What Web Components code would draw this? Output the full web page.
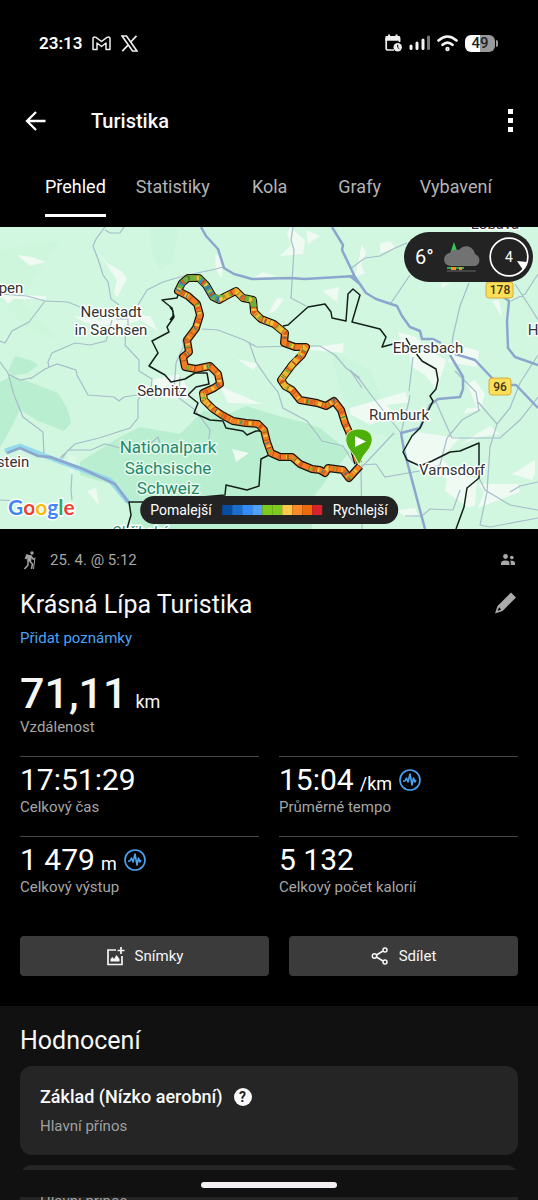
<!DOCTYPE html>
<html lang="cs">
<head>
<meta charset="utf-8">
<meta name="viewport" content="width=device-width, initial-scale=1">
<title>Turistika</title>
<style>
  html, body { margin: 0; background: #000; }
  body { font-family: Roboto, "Liberation Sans", sans-serif; color: #fff; }
</style>
</head>
<body>
<hike-page></hike-page>

<script>
const define = (name, html, setup) => {
  const tpl = document.createElement('template');
  tpl.innerHTML = html;
  customElements.define(name, class extends HTMLElement {
    constructor() {
      super();
      this.attachShadow({ mode: 'open' }).append(tpl.content.cloneNode(true));
    }
    connectedCallback() { if (setup) setup(this, this.shadowRoot); }
  });
};

/* System status bar */
define('status-bar', `
<style>
  :host { display: flex; align-items: center; justify-content: space-between; height: 86px; padding: 0 43px 0 39px; }
  div { display: flex; align-items: center; }
  .time { font-size: 17px; font-weight: 600; line-height: 24px; margin-right: 10px; }
  .left svg + svg { margin-left: 10px; }
  .battery { position: relative; display: flex; justify-content: center; width: 30px; height: 17px; border-radius: 6px; color: #222; font-size: 15px; font-weight: 500; background: linear-gradient(90deg, #fff 50%, #999 50%); line-height: 17px; }
  .battery::after { content: ""; position: absolute; right: -3px; top: 5px; width: 2px; height: 7px; border-radius: 0 2px 2px 0; background: #999; }
  .right { gap: 7px; }
</style>
<div class="left">
  <span class="time">23:13</span>
  <svg width="19" height="15" viewBox="0 0 19 15" fill="none" stroke="#eee" stroke-width="1.500" stroke-linejoin="round"><path d="M1 13.500V2.500Q1 .4 4 1.400L9.500 5.500 15 1.400Q18 .4 18 2.500V13.500H14V7L9.500 10.500 5 7V13.500Z"/></svg>
  <svg width="17" height="17" viewBox="0 0 17 17" fill="none" stroke="#eee" stroke-width="1.700"><path d="M1 1H5.500L16 16H11.500Z"/><path d="M15.500 .8 9.700 7M7.300 9.800 1.300 16.200"/></svg>
</div>
<div class="right">
  <svg width="17" height="18" viewBox="0 0 17 18"><path d="M1.200 4V14.500Q1.200 16 3 16H9M14.500 4V8" fill="none" stroke="#eee" stroke-width="1.700"/><path d="M.4 2.500Q.4 2 1.500 2H3V.5H5V2H10.500V.5H12.500V2H14Q15.200 2 15.200 3V6.800H.4Z" fill="#eee"/><circle cx="12.700" cy="13.200" r="4.200" fill="#eee"/><path d="M12.700 10.700V13.300L14.300 14.800" stroke="#000" fill="none"/></svg>
  <svg width="21" height="16" viewBox="0 0 21 16"><g stroke-linecap="round" stroke-width="3"><path d="M2 11V13.500M8 8V13.500M14 5V13.500" stroke="#f4f4f4"/><path d="M19.500 2V13.500" stroke="#777"/></g></svg>
  <svg width="21" height="17" viewBox="0 0 21 17" fill="none" stroke="#f4f4f4" stroke-width="2.600" stroke-linecap="round"><path d="M1.500 5.500Q10.500-2.500 19.500 5.500M5.500 9.800Q10.500 5.300 15.500 9.800"/><circle cx="10.500" cy="14" r=".9"/></svg>
  <div class="battery">49</div>
</div>`);

/* Title row with back and overflow buttons */
define('app-header', `
<style>
  :host { display: flex; align-items: center; height: 70px; padding: 0 22px 0 23px; }
  button { display: flex; padding: 0; border: 0; background: none; }
  h1 { flex: 1; margin: 0 0 0 44px; font-size: 20px; line-height: 24px; font-weight: 500; color: #fafafa; }
</style>
<button aria-label="Zpět"><svg width="24" height="24" viewBox="0 0 24 24" fill="none" stroke="#fff" stroke-width="2.300"><path d="M22.500 12H4M13 3 4 12 13 21"/></svg></button>
<h1><slot></slot></h1>
<button aria-label="Další možnosti"><svg width="11" height="26" viewBox="0 0 11 26" fill="#fff"><path d="M3 1h5v5H3zM3 10h5v5H3zM3 19h5v5H3z"/></svg></button>`);

define('tab-item', `
<style>
  :host { display: block; box-sizing: border-box; min-width: 90px; padding: 0 15px; text-align: center; }
  button { box-sizing: border-box; height: 61px; padding: 4px 0 0; border: 0; border-bottom: 3px solid transparent; background: none; color: #b4b4b4; font: 18px/24px Roboto, "Liberation Sans", sans-serif; }
  :host([selected]) button { color: #fff; border-color: #fff; }
</style>
<button role="tab"><slot></slot></button>`);

define('tab-strip', `
<style>:host { display: flex; height: 71px; padding-left: 30px; box-sizing: border-box; }</style>
<slot></slot>`);

/* Map with the recorded route */
define('route-map', `
<style>
  :host { display: block; position: relative; overflow: hidden; background: #d1f7e0; }
  .map { display: block; width: 100%; height: auto; }
  .pill { position: absolute; display: flex; align-items: center; background: #232323; box-sizing: border-box; }
  .weather { top: 5px; right: 5px; width: 129px; height: 50px; border-radius: 25px; padding: 0 4px 0 11px; font-size: 20px; justify-content: space-between; }
  .legend { left: 50%; bottom: 5px; transform: translateX(-50%); height: 28px; border-radius: 14px; padding: 0 10px; gap: 10px; font-size: 14px; line-height: 20px; white-space: nowrap; }
  .scale { display: flex; width: 101px; height: 10px; }
  .scale i { flex: 1; }
  .place { font-size: 15px; fill: #333; text-anchor: middle; stroke: #fff; stroke-width: 3px; paint-order: stroke; stroke-linejoin: round; }
  .park { font-size: 17px; fill: #26886a; stroke: #e5faed; }
  .shield { font-size: 12px; font-weight: 500; fill: #443511; text-anchor: middle; }
  .logo { font-family: Lato, sans-serif; font-size: 21px; font-weight: 700; stroke: #fff; stroke-width: 3px; paint-order: stroke; stroke-linejoin: round; }
</style>
<svg class="map" viewBox="0 227 538 302">
  <rect y="227" width="538" height="302" fill="#d1f7e0"/>
  <g fill="#b9efd0">
    <path d="M0 382 12 376 35 384 58 393 68 410 71 423 64 431 38 421 20 410 10 430 0 448Z"/>
    <path d="M8 371 15 356 30 360 38 365 28 373 12 376Z"/>
    <path d="M80 462 118 438 140 427 180 434 204 410 220 418 246 406 282 417 303 422 320 428 350 452 330 475 315 495 312 529H133L128 502 110 484 80 475Z"/>
    <path d="M150 227H180L172 262 160 270 151 250Z" opacity=".2"/>
    <path d="M330 350 370 370 400 440 360 430 340 390Z" opacity=".2"/>
    <path d="M60 240 20 300 60 340 30 330 0 300V250Z" opacity=".15"/>
  </g>
  <g fill="#effaf3">
    <path d="M17 255 32 257 46 262 30 266Z"/><path d="M97 250 107 263 123 272 127 279 117 297 114 293 117 280 109 268Z"/>
    <path d="M0 294 46 296 46 299 14 299 8 304Z"/><path d="M74 316 100 320 110 315 150 316 158 331 140 320 120 327 85 323Z"/>
    <path d="M290 227 305 240 303 254 280 256 291 245 287 234Z"/><path d="M306 230 320 236 308 244Z"/>
    <path d="M277 298 284 299 275 311 268 314Z"/><path d="M322 291 339 287 337 302Z"/><path d="M310 348 344 343 343 353 310 350Z"/>
    <path d="M253 278 263 272 276 276Z"/><path d="M215 254 223 259 222 278 216 270Z"/><path d="M220 386 250 399 262 404 228 403Z"/>
    <path d="M232 449 249 453 236 462 234 454Z"/><path d="M150 380 178 374 185 383 190 399 162 398Z"/><path d="M237 359 258 364 253 370Z"/>
    <path d="M350 408 405 392 409 402 387 405 395 415 370 425 350 414Z"/><path d="M398 332 416 337 425 348 446 360 437 390 425 375 412 367 408 350 402 344Z"/>
    <path d="M465 347 479 351 477 367 448 362 450 356Z"/><path d="M475 380 485 394 480 410 463 414 467 408 477 408 467 384Z"/>
    <path d="M415 432 460 438 454 444 442 458 455 474 477 478 475 505 469 508 445 491 447 478 418 470 403 455 407 445Z"/>
    <path d="M478 484 518 484 520 492 478 508 484 492Z"/><path d="M535 460V473L532 480 512 474Z"/>
    <path d="M492 301 499 300 502 317Z"/><path d="M362 244 366 253 361 265 365 273 355 277Z"/><path d="M380 243 390 241 396 249 380 253Z"/>
    <path d="M68 454 76 457 74 476 69 472Z" opacity=".4"/><path d="M87 491 96 488 99 505Z"/><path d="M397 510 415 508 418 515 405 517Z"/>
    <path d="M441 283 450 283 442 288ZM460 445 472 437 490 426 500 434 480 437Z"/>
  </g>
  <g fill="none" stroke="#a7bdca" stroke-width="1.200">
    <path d="M105 227 96 239 93 246 99 262 103 275 108 282 111 299 119 305M105 230 110 233 120 233 124 227M0 294 27 296 45 301 68 302 80 307M45 301 29 322 12 331 5 343 0 341M112 320 106 341 90 345 75 343 52 353 48 362 49 368M30 379 45 369 57 364 76 370 77 375 88 395 114 397 119 401 124 397 137 395 151 389 152 379 139 371 139 360 125 345 126 326M116 319H128V326M138 305 147 290 163 282 180 277 197 273 216 269 223 267M0 362 8 373 14 395 23 417 43 432 44 455 52 458M8 374 20 380 31 378M60 458 75 444 99 438 130 428 138 418 138 400 145 391M62 459 68 450 91 450 105 444 120 448 150 444 158 437 160 443M72 474 71 490 72 500M0 500 20 501M202 329 218 330 244 340 257 347 300 346 320 346 335 355 346 368 360 378M249 342 256 362 269 381 278 392 283 408 307 421 322 441 343 446 355 465M293 227 291 240 294 250 291 298 306 306M350 269 365 258 380 256 393 249 407 243M391 303 410 275M469 283 460 306 453 336 451 353M515 284 530 307 538 320M511 301 525 294 538 274M538 355 520 383 510 408 497 424 490 447 487 492 480 525 490 527 538 518M478 402 497 424M538 397 520 420 500 438 452 438 436 402M480 410 462 420 447 438 440 465 425 470 385 477 376 464 361 465M361 468 394 433M361 468 362 529M405 516 422 516 430 509 453 510 460 490M479 478 485 490 510 505 538 510M538 482 520 486 510 492M410 395 408 405 401 433M413 357 409 391M455 371 476 392 479 411"/>
    <path d="M180 377 179 398 195 410 210 430 208 447M174 390 176 363 184 345 182 340M350 370 360 380 371 395 401 433M350 370 362 388"/>
  </g>
  <g fill="none" stroke-linejoin="round">
    <path d="M5 451 20 446 40 454 75 467 110 480 128 502" stroke="#95d9ec" stroke-width="5"/>
    <g stroke="#8ca6cd" stroke-width="2.500">
      <path d="M7 453 20 448 38 456 50 457 83 469 115 484 129 503M201 227 206 236 218 249 224 268 234 274 252 279 290 278 305 279 355 276M332 227 343 245 342 250 355 277 366 293 376 299 397 306 402 316 410 327 420 331 422 339 433 339 441 343M455 354 475 360 492 378 503 385 516 385 538 408M350 276 360 284M502 296 509 301 507 321 508 348 515 357 538 365M450 355 463 377 463 389 460 397 438 399 430 405 420 428 401 433 404 450 425 529"/>
    </g>
    <g stroke="#15201b" stroke-width="1.500">
      <path d="M180 288 177 298 162 300 172 308 174 317 167 327 169 332 152 341 158 353 149 366 165 375 171 382 185 379 195 373 207 373 209 384 196 387 188 395 198 403 194 413 210 420 223 421 226 428 243 431 247 435 256 431 263 431M269 455 261 459 259 486 247 490 226 485 225 495 145 502H129L131 515 127 529M170 307 173 311V316L170 320"/>
      <path d="M283 326 288 325 308 307 325 304 331 312 332 318 346 321 348 294 353 289 360 295 352 322 380 329 386 337 382 347 393 344M406 338 411 347 422 361 436 369 438 380 436 389 430 396 433 401 420 428 412 436 403 452 407 460 420 466 432 461 450 452 460 451 479 443V478L467 488 464 507 456 529"/>
    </g>
    <path id="route" d="M358 463 349 432 345 423 341 410 334 401 326 406 317 403 300 400 292 390 285 386 281 380 292 365 302 355 306 347 295 347 284 343 285 333 274 324 261 319 254 312 253 300 243 298 236 291 226 296 219 300 213 297 206 285 199 278 188 278 182 283 178 291 188 296 197 304 200 315 196 328 187 340 189 352 183 357 185 367 196 369 210 366 218 374 220 384 214 388 203 393 204 400 213 409 222 415 233 421 246 423 258 424 264 430 267 442 271 453 280 457 292 457 300 464 312 469 320 470 325 473 328 468 343 470 349 478 360 466" stroke="#18160d" stroke-width="8"/>
    <path class="line" stroke="#f57b20" stroke-width="5.500"/>
    <path d="M281 380 285 386 292 390M306 347 292 365 281 380M285 333 274 324 261 319 254 312 253 300 243 298 236 291 226 296 219 300M203 393 204 400 213 409" stroke="#eab52d" stroke-width="5.500" stroke-dasharray="11 4"/>
    <path d="M254 307 253 300 245 298M224 298 213 297 206 285 199 278 188 278 182 283 178 291" stroke="#69b33b" stroke-width="5.500"/>
    <path d="M220 300 213 297 206 285 198 278M184 281 178 291" stroke="#3c8fba" stroke-width="5.500" stroke-dasharray="5 3"/>
    <path class="line" stroke="#f5c63c" stroke-width="4" stroke-dasharray="2 9 4 13 1 6"/>
    <path class="line" stroke="#e35a1f" stroke-width="5" stroke-dasharray="2 12 3 21"/>
    <path class="line" stroke="#70b83a" stroke-width="4" stroke-dasharray="2 25 1 19"/>
    <path class="line" stroke="#3b6d94" stroke-width="4" stroke-dasharray="1 27 1 38"/>
    <path class="line" stroke="#59421e" stroke-width="5.500" stroke-dasharray="1 7" opacity=".45"/>
  </g>
  <path d="M359 465Q355 455 349 449C342 438 347 429 359 429S376 438 369 449Q363 455 359 465Z" fill="#4caf0a" stroke="#e3f7dc"/>
  <path d="M355 436V447L366 441.500Z" fill="#fff"/>
  <g class="place">
    <text x="111" y="317">Neustadt</text><text x="111" y="335">in Sachsen</text>
    <text x="11" y="293">pen</text><text x="13" y="467">stein</text>
    <text x="162" y="396">Sebnitz</text><text x="428" y="353">Ebersbach</text>
    <text x="399" y="420">Rumburk</text><text x="452" y="475">Varnsdorf</text>
    <text x="495" y="229">Lobava</text><text x="533" y="335">H</text>
    <text class="park" x="168" y="453">Nationalpark</text><text class="park" x="168" y="474">Sächsische</text><text class="park" x="168" y="494">Schweiz</text>
    <text x="140" y="537" style="font-style:italic;fill:#26886a">Chřibská</text>
  </g>
  <g fill="#fbdf58" stroke="#d6ac3c"><rect x="486" y="282" width="27" height="16" rx="3"/><rect x="489" y="378" width="22" height="17" rx="3"/></g>
  <text class="shield" x="500" y="294">178</text><text class="shield" x="500" y="391">96</text>
  <text class="logo" x="8" y="515"><tspan fill="#4285f4">G</tspan><tspan fill="#ea4335">o</tspan><tspan fill="#fbbc05">o</tspan><tspan fill="#4285f4">g</tspan><tspan fill="#34a853">l</tspan><tspan fill="#ea4335">e</tspan></text>
</svg>
<div class="pill weather">
  <span>6°</span>
  <svg width="37" height="30" viewBox="0 0 37 30"><path d="M11 0 7 12H15Z" fill="#35c759"/><path d="M8 24C-1 24-1 12 7 11C9 7 14 7 16 8C20 2 30 3 32 12C39 15 37 24 31 24Z" fill="#727272"/><path d="M4 25H21V27H4Z" fill="#34a84b"/><path d="M8 25h5v3H8zM16 25h3v3h-3z" fill="#f39128"/><path d="M4 29H33" stroke="#666"/></svg>
  <svg width="40" height="40" viewBox="0 0 40 40"><circle cx="20" cy="20" r="18.800" fill="none" stroke="#fff" stroke-width="1.700"/><path d="M28 24 38 25 34 33Z" fill="#fff"/><text x="20" y="25" text-anchor="middle" fill="#fff" font-size="14">4</text></svg>
</div>
<div class="pill legend"><span>Pomalejší</span><span class="scale"><i style="background:#084d9e"></i><i style="background:#1c6ece"></i><i style="background:#338cf5"></i><i style="background:#4fa0fb"></i><i style="background:#7ecb20"></i><i style="background:#7ecb20"></i><i style="background:#fdcb4b"></i><i style="background:#fb8a28"></i><i style="background:#ed6a0b"></i><i style="background:#d8232a"></i></span><span>Rychlejší</span></div>`,
(host, root) => {
  const d = root.getElementById('route').getAttribute('d');
  root.querySelectorAll('.line').forEach(p => p.setAttribute('d', d));
});

/* One measured value with unit and caption */
define('metric-tile', `
<style>
  :host { display: block; box-sizing: border-box; height: 80px; padding-top: 5px; border-top: 1px solid #474747; }
  :host([large]) { border: 0; padding: 0; height: 87px; }
  .value { display: flex; align-items: baseline; font-size: 30px; line-height: 35px; height: 35px; white-space: pre; }
  .unit { font-size: 18px; line-height: 24px; margin-left: 6px; }
  :host(:not([unit])) .unit { display: none; }
  .label { font-size: 15px; line-height: 20px; color: #a6a6a6; }
  svg { display: none; align-self: center; margin-left: 7px; }
  :host([sensor]) svg { display: block; }
  :host([large]) .value { font-size: 43px; line-height: 48px; height: 48px; font-weight: 500; color: #f5f5f5; }
  :host([large]) .unit { font-weight: 400; margin-left: 8px; }
</style>
<div class="value"><slot></slot><span class="unit"></span><svg width="22" height="22" viewBox="0 0 22 22" fill="none" stroke="#4aa3f5" stroke-width="1.600"><circle cx="11" cy="11" r="10"/><path d="M4 12H6L7.500 9 9 13 11 5 13 16 14.500 9 16 13 17 11" stroke-linejoin="round"/></svg></div>
<div class="label"></div>`,
(host, root) => {
  root.querySelector('.unit').textContent = host.getAttribute('unit') || '';
  root.querySelector('.label').textContent = host.getAttribute('label');
});

define('action-button', `
<style>
  :host { display: block; }
  button { display: flex; align-items: center; justify-content: center; gap: 10px; width: 100%; height: 40px; padding: 0; border: 0; border-radius: 4px; background: #3b3b3b; color: #f5f5f5; font: 15px/20px Roboto, "Liberation Sans", sans-serif; }
</style>
<button><slot name="icon"></slot><slot></slot></button>`);

/* Activity name, date and totals */
define('activity-summary', `
<style>
  :host { display: block; padding: 18px 20px 30px; background: #000; }
  .meta, .title { display: flex; align-items: center; justify-content: space-between; }
  .meta { height: 26px; color: #a6a6a6; font-size: 15px; line-height: 24px; }
  .when { display: flex; align-items: center; gap: 12px; }
  .title { height: 34px; margin-top: 15px; }
  h2 { margin: 0; font-size: 25px; line-height: 32px; font-weight: 400; color: #f7f7f7; }
  button { display: flex; border: 0; padding: 0; background: none; }
  a { display: block; margin: 6px 0 21px; font-size: 15px; line-height: 20px; color: #4aa3f5; text-decoration: none; }
  .grid { display: grid; grid-template-columns: 1fr 1fr; column-gap: 20px; }
  .actions { display: grid; grid-template-columns: 50% 1fr; column-gap: 20px; margin-top: 20px; }
</style>
<div class="meta">
  <span class="when"><svg width="18" height="20" viewBox="0 0 18 20" fill="none" stroke="#a6a6a6" stroke-width="1.500"><circle cx="12" cy="3" r="1.700" fill="#a6a6a6" stroke="none"/><path d="M8 5.500 11 6 10.500 11 8 11Z" fill="#a6a6a6"/><path d="M8 11.500 8 15 4.500 19M10 11.500 12.500 14 11.500 19M11 6 13 9H15"/><path d="M7.500 4.500 5.500 9" stroke-width="2"/><path d="M15 7.500 13.500 19" stroke-width="1"/></svg><span>25. 4. @ 5:12</span></span>
  <svg width="18" height="16" viewBox="0 0 18 16" fill="#aaa"><circle cx="5.500" cy="4.500" r="2.400"/><circle cx="11.800" cy="5.500" r="1.800"/><path d="M1 13V11.500Q1 8.500 5 8.500H6Q9.500 8.500 9.500 11.500V13ZM10.800 13V11Q10.800 9.800 10 8.700H12Q15 8.700 15 11.500V13Z"/></svg>
</div>
<div class="title"><h2>Krásná Lípa Turistika</h2><button aria-label="Upravit"><svg width="25" height="25" viewBox="0 0 25 25" fill="#aaa" style="margin-bottom:4px"><path d="M18 1.500 23 6.500 9.500 20 2 22.500 4.500 15ZM6 16.300 4.600 20 8.200 18.600Z" fill-rule="evenodd"/></svg></button></div>
<a href="#poznamky">Přidat poznámky</a>
<metric-tile large unit="km" label="Vzdálenost">71,11</metric-tile>
<div class="grid">
  <metric-tile label="Celkový čas">17:51:29</metric-tile>
  <metric-tile unit="/km" sensor label="Průměrné tempo">15:04</metric-tile>
  <metric-tile unit="m" sensor label="Celkový výstup">1 479</metric-tile>
  <metric-tile label="Celkový počet kalorií">5 132</metric-tile>
</div>
<div class="actions">
  <action-button><svg slot="icon" width="19" height="19" viewBox="0 0 19 19" fill="none" stroke="#f5f5f5" stroke-width="1.700"><path d="M10 3H2V17.500H16V9M15 0V7M11.500 3.500H18.500"/><path d="M4.500 14.500V12L6.500 10 8 12 10.500 8 13.500 12V14.500Z" fill="#f5f5f5" stroke="none"/></svg>Snímky</action-button>
  <action-button><svg slot="icon" width="18" height="18" viewBox="0 0 18 18" fill="none" stroke="#f5f5f5" stroke-width="1.500"><circle cx="14" cy="3" r="2"/><circle cx="3.500" cy="9" r="2.200"/><circle cx="14" cy="15" r="2"/><path d="M5.500 8 12 4M5.500 10 12 14"/></svg>Sdílet</action-button>
</div>`);

define('rating-card', `
<style>
  :host { display: block; padding: 19px 20px; border-radius: 12px; background: #252525; font-size: 15px; line-height: 20px; color: #a0a0a0; }
  .head { display: flex; align-items: center; gap: 11px; margin-bottom: 8px; font-size: 18px; line-height: 23px; font-weight: 500; color: #fafafa; }
  :host([bare]) .head { display: none; }
  :host([bare]) { padding-top: 26px; }
  button { display: flex; width: 18px; height: 18px; align-items: center; justify-content: center; padding: 0; border: 0; border-radius: 50%; background: #fafafa; color: #222; font: 700 14px/18px Roboto, sans-serif; }
</style>
<div class="head"><slot name="title"></slot><button aria-label="Nápověda">?</button></div>
<slot></slot>`);

define('rating-section', `
<style>
  :host { display: block; flex: 1 1 0; min-height: 0; overflow: hidden; padding: 0 20px; background: #111; }
  h2 { margin: 19px 0 9px; font-size: 25px; line-height: 32px; font-weight: 400; color: #f7f7f7; }
  rating-card + rating-card { margin-top: 10px; }
</style>
<h2>Hodnocení</h2>
<rating-card><span slot="title">Základ (Nízko aerobní)</span>Hlavní přínos</rating-card>
<rating-card bare>Hlavní přínos</rating-card>`);

/* Gesture handle laid over the scrolling content */
define('gesture-bar', `
<style>
  :host { position: fixed; left: 0; right: 0; bottom: 3px; height: 27px; display: flex; align-items: center; justify-content: center; background: #111; }
  i { width: 136px; height: 6px; border-radius: 3px; background: #f3eff3; margin-top: 3px; }
</style>
<i></i>`);

define('hike-page', `
<style>:host { display: flex; flex-direction: column; height: 100vh; }
  :host > * { flex-shrink: 0; }
  rating-section { flex-shrink: 1; }
</style>
<status-bar></status-bar>
<app-header>Turistika</app-header>
<tab-strip>
  <tab-item selected>Přehled</tab-item><tab-item>Statistiky</tab-item><tab-item>Kola</tab-item><tab-item>Grafy</tab-item><tab-item>Vybavení</tab-item>
</tab-strip>
<route-map></route-map>
<activity-summary></activity-summary>
<rating-section></rating-section>
<gesture-bar></gesture-bar>`);
</script>
</body>
</html>
